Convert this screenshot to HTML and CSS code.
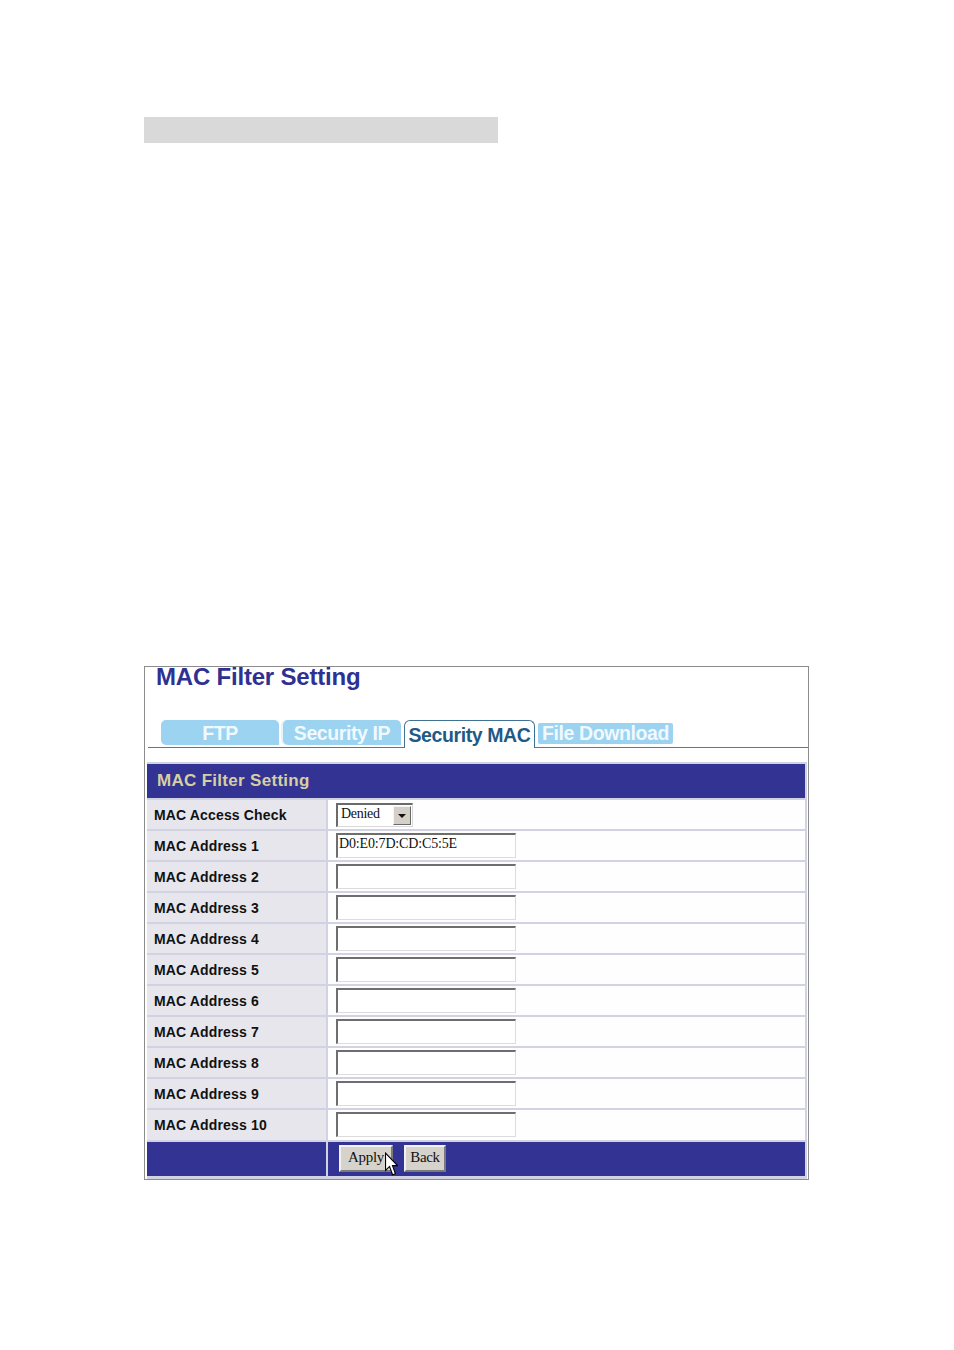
FILE: index.html
```html
<!DOCTYPE html>
<html>
<head>
<meta charset="utf-8">
<link rel="stylesheet" href="styles.css">
</head>
<body>
<div class="topbar"></div>
<div class="frame">
  <h1 class="title">MAC Filter Setting</h1>
  <div class="tabs">
    <div class="tab tab-round">FTP</div>
    <div class="tab tab-round tab-sep">Security IP</div>
    <div class="tab tab-active">Security MAC</div>
    <div class="tab tab-flat">File Download</div>
  </div>
  <div class="table">
    <div class="head">MAC Filter Setting</div>
    <div class="row">
      <div class="label">MAC Access Check</div>
      <div class="value">
        <div class="select"><span class="sel-text">Denied</span><span class="sel-btn"><span class="arrow"></span></span></div>
      </div>
    </div>
    <div class="row"><div class="label">MAC Address 1</div><div class="value"><div class="input">D0:E0:7D:CD:C5:5E</div></div></div>
    <div class="row"><div class="label">MAC Address 2</div><div class="value"><div class="input"></div></div></div>
    <div class="row"><div class="label">MAC Address 3</div><div class="value"><div class="input"></div></div></div>
    <div class="row"><div class="label">MAC Address 4</div><div class="value"><div class="input"></div></div></div>
    <div class="row"><div class="label">MAC Address 5</div><div class="value"><div class="input"></div></div></div>
    <div class="row"><div class="label">MAC Address 6</div><div class="value"><div class="input"></div></div></div>
    <div class="row"><div class="label">MAC Address 7</div><div class="value"><div class="input"></div></div></div>
    <div class="row"><div class="label">MAC Address 8</div><div class="value"><div class="input"></div></div></div>
    <div class="row"><div class="label">MAC Address 9</div><div class="value"><div class="input"></div></div></div>
    <div class="row"><div class="label">MAC Address 10</div><div class="value"><div class="input"></div></div></div>
    <div class="foot">
      <div class="foot-left"></div>
      <div class="foot-right">
        <div class="btn btn-apply">Apply</div>
        <div class="btn btn-back">Back</div>
        <svg class="cursor" width="13" height="25" viewBox="0 0 12 22">
          <path d="M0.5 0.5 L0.5 16.5 L4.2 12.8 L7 20.5 L9.6 19.5 L6.9 12 L11.5 12 Z" fill="#fff" stroke="#000" stroke-width="1" stroke-linejoin="miter"/>
        </svg>
      </div>
    </div>
  </div>
</div>
</body>
</html>
```

FILE: styles.css
```css
html, body {
  margin: 0;
  padding: 0;
  background: #ffffff;
}
body {
  font-family: "Liberation Sans", Arial, sans-serif;
  width: 954px;
  height: 1350px;
  overflow: hidden;
}
.topbar {
  margin-top: 117px;
  margin-left: 144px;
  width: 354px;
  height: 26px;
  background: #d9d9d9;
}
.frame {
  margin-top: 523px;
  margin-left: 144px;
  width: 663px;
  border: 1px solid #8c8c8c;
  display: flex;
  flex-direction: column;
  background: #fff;
}
.title {
  margin: -2px 0 0 11px;
  font-size: 24px;
  line-height: 24px;
  font-weight: bold;
  color: #2e3192;
  letter-spacing: -0.2px;
}
.tabs {
  margin: 31px 0 0 3px;
  padding-left: 13px;
  height: 27px;
  border-bottom: 1px solid #4d7f9c;
  display: flex;
  align-items: flex-start;
  gap: 3px;
}
.tab {
  box-sizing: border-box;
  height: 25px;
  display: flex;
  align-items: center;
  justify-content: center;
  padding-top: 1px;
  font-size: 19.5px;
  font-weight: bold;
  letter-spacing: -0.4px;
  color: #f0f9fe;
  background: #9bd3f1;
}
.tab-round {
  width: 118px;
  border-radius: 5px 5px 0 5px;
}
.tab-sep {
  margin-left: 1px;
  box-shadow: -2px 0 0 #e6f3fa;
}
.tab-active {
  width: 131px;
  height: 28px;
  background: #ffffff;
  color: #1f5a87;
  border: 1px solid #3f7393;
  border-bottom: none;
  border-radius: 6px 6px 0 0;
  padding-top: 1px;
  margin-left: 0;
}
.tab-flat {
  width: 135px;
  height: 21px;
  margin-top: 3px;
  border-radius: 2px;
  padding-top: 0;
}
.table {
  margin: 14px 1px 0 2px;
  padding: 2px 2px 3px 0;
  background: #d2d3e2;
  display: flex;
  flex-direction: column;
  gap: 2px;
}
.head {
  height: 34px;
  background: #333394;
  color: #d6cfa2;
  font-size: 17px;
  font-weight: bold;
  letter-spacing: 0.3px;
  display: flex;
  align-items: center;
  padding-left: 10px;
}
.row {
  height: 29.05px;
  display: flex;
  gap: 2px;
}
.label {
  width: 172px;
  padding-left: 7px;
  background: #e6e6ec;
  font-size: 14px;
  font-weight: bold;
  letter-spacing: 0.15px;
  color: #111;
  display: flex;
  align-items: center;
}
.value {
  flex: 1;
  background: #fefefe;
  padding-left: 8px;
  display: flex;
  align-items: center;
}
.select {
  box-sizing: border-box;
  width: 77px;
  height: 24px;
  border-top: 2px solid #6a6a6a;
  border-left: 2px solid #6a6a6a;
  border-right: 1px solid #d8d8d8;
  border-bottom: 1px solid #d8d8d8;
  display: flex;
  background: #fff;
}
.sel-text {
  flex: 1;
  font-family: "Liberation Serif", "Times New Roman", serif;
  font-size: 14px;
  color: #111;
  padding-left: 3px;
  line-height: 18px;
  letter-spacing: -0.3px;
}
.sel-btn {
  width: 16px;
  margin: 1px 1px 1px 0;
  background: #d4d0c8;
  border-top: 1px solid #f4f4f4;
  border-left: 1px solid #f4f4f4;
  border-right: 1px solid #6a6a6a;
  border-bottom: 1px solid #6a6a6a;
  display: flex;
  align-items: center;
  justify-content: center;
}
.arrow {
  width: 0;
  height: 0;
  border-left: 4px solid transparent;
  border-right: 4px solid transparent;
  border-top: 4px solid #111;
  margin-top: 1px;
}
.input {
  box-sizing: border-box;
  width: 180px;
  height: 25px;
  border-top: 2px solid #6e6e6e;
  border-left: 2px solid #6e6e6e;
  border-right: 1px solid #dcdcdc;
  border-bottom: 1px solid #dcdcdc;
  background: #fff;
  font-family: "Liberation Serif", "Times New Roman", serif;
  font-size: 14px;
  line-height: 17px;
  letter-spacing: -0.15px;
  color: #111;
  padding-left: 1px;
}
.foot {
  height: 34px;
  display: flex;
  gap: 2px;
}
.foot-left {
  width: 179px;
  background: #333394;
}
.foot-right {
  flex: 1;
  background: #333394;
  display: flex;
  align-items: center;
  padding-left: 11px;
  gap: 11px;
  position: relative;
}
.btn {
  box-sizing: border-box;
  height: 27px;
  background: #d6d3cc;
  border-top: 2px solid #f2f2f2;
  border-left: 2px solid #f2f2f2;
  border-right: 2px solid #7a7a7a;
  border-bottom: 2px solid #7a7a7a;
  font-family: "Liberation Serif", "Times New Roman", serif;
  font-size: 15px;
  color: #111;
  display: flex;
  align-items: center;
  justify-content: center;
  padding-bottom: 3px;
  letter-spacing: -0.3px;
}
.btn-apply {
  width: 54px;
}
.btn-back {
  width: 42px;
}
.cursor {
  position: absolute;
  left: 57px;
  top: 10px;
}
```
